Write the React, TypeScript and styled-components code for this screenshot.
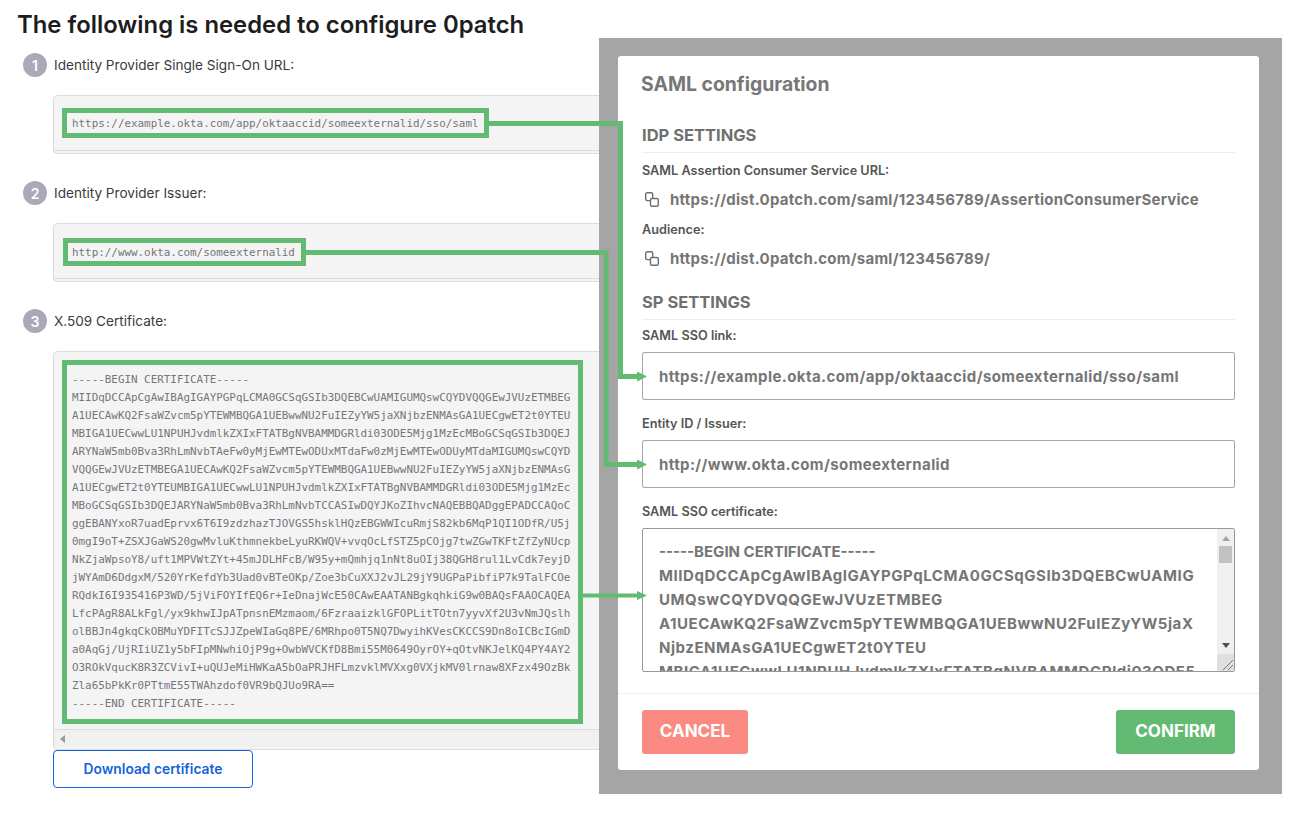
import React from "react";
import styled, { createGlobalStyle } from "styled-components";

const GlobalStyle = createGlobalStyle`
  html, body { margin: 0; padding: 0; background: #fff; }
  #root { width: 1312px; height: 821px; position: relative; overflow: hidden; }
  * { box-sizing: border-box; }
`;

const GREEN = "#62ba73";

const certLines = [
  "-----BEGIN CERTIFICATE-----",
  "MIIDqDCCApCgAwIBAgIGAYPGPqLCMA0GCSqGSIb3DQEBCwUAMIGUMQswCQYDVQQGEwJVUzETMBEG",
  "A1UECAwKQ2FsaWZvcm5pYTEWMBQGA1UEBwwNU2FuIEZyYW5jaXNjbzENMAsGA1UECgwET2t0YTEU",
  "MBIGA1UECwwLU1NPUHJvdmlkZXIxFTATBgNVBAMMDGRldi03ODE5Mjg1MzEcMBoGCSqGSIb3DQEJ",
  "ARYNaW5mb0Bva3RhLmNvbTAeFw0yMjEwMTEwODUxMTdaFw0zMjEwMTEwODUyMTdaMIGUMQswCQYD",
  "VQQGEwJVUzETMBEGA1UECAwKQ2FsaWZvcm5pYTEWMBQGA1UEBwwNU2FuIEZyYW5jaXNjbzENMAsG",
  "A1UECgwET2t0YTEUMBIGA1UECwwLU1NPUHJvdmlkZXIxFTATBgNVBAMMDGRldi03ODE5Mjg1MzEc",
  "MBoGCSqGSIb3DQEJARYNaW5mb0Bva3RhLmNvbTCCASIwDQYJKoZIhvcNAQEBBQADggEPADCCAQoC",
  "ggEBANYxoR7uadEprvx6T6I9zdzhazTJOVGS5hsklHQzEBGWWIcuRmjS82kb6MqP1QI1ODfR/U5j",
  "0mgI9oT+ZSXJGaWS20gwMvluKthmnekbeLyuRKWQV+vvqOcLfSTZ5pCOjg7twZGwTKFtZfZyNUcp",
  "NkZjaWpsoY8/uft1MPVWtZYt+45mJDLHFcB/W95y+mQmhjq1nNt8uOIj38QGH8rul1LvCdk7eyjD",
  "jWYAmD6DdgxM/520YrKefdYb3Uad0vBTeOKp/Zoe3bCuXXJ2vJL29jY9UGPaPibfiP7k9TalFCOe",
  "RQdkI6I935416P3WD/5jViFOYIfEQ6r+IeDnajWcE50CAwEAATANBgkqhkiG9w0BAQsFAAOCAQEA",
  "LfcPAgR8ALkFgl/yx9khwIJpATpnsnEMzmaom/6FzraaizklGFOPLitTOtn7yyvXf2U3vNmJQslh",
  "olBBJn4gkqCkOBMuYDFITcSJJZpeWIaGq8PE/6MRhpo0T5NQ7DwyihKVesCKCCS9Dn8oICBcIGmD",
  "a0AqGj/UjRIiUZ1y5bFIpMNwhiOjP9g+OwbWVCKfD8Bmi55M0649OyrOY+qOtvNKJelKQ4PY4AY2",
  "O3ROkVqucK8R3ZCVivI+uQUJeMiHWKaA5bOaPRJHFLmzvklMVXxg0VXjkMV0lrnaw8XFzx49OzBk",
  "Zla65bPkKr0PTtmE55TWAhzdof0VR9bQJUo9RA==",
  "-----END CERTIFICATE-----",
];

const Page = styled.div`
  width: 1312px;
  height: 821px;
  padding: 10px 0 0 18px;
  font-family: Inter, "Liberation Sans", sans-serif;
  color: #1d1d21;
`;

const Title = styled.h1`
  margin: 0 0 13px -1px;
  font-size: 23.85px;
  line-height: 30px;
  font-weight: 600;
  color: #1d1d21;
`;

const StepRow = styled.div`
  display: flex;
  align-items: center;
  gap: 7px;
  height: 24px;
  margin: 0 0 18px 5px;
`;

const StepNumber = styled.span`
  width: 24px;
  height: 24px;
  border-radius: 50%;
  background: #a9a9b7;
  color: #fff;
  font-size: 14px;
  font-weight: 600;
  display: flex;
  align-items: center;
  justify-content: center;
`;

const StepLabel = styled.span`
  font-size: 13.6px;
  color: #3a3a40;
`;

const CodeBlock = styled.div<{ $mb?: number }>`
  width: 600px;
  margin: 0 0 ${(p) => p.$mb ?? 27}px 35px;
  background: #f4f4f4;
  border: 1px solid #dcdcdc;
  border-radius: 4px;
  padding-bottom: 2px;
`;

const CodeInner = styled.div<{ $h: number; $pt: number; $pl: number }>`
  height: ${(p) => p.$h}px;
  padding: ${(p) => p.$pt}px 0 0 ${(p) => p.$pl}px;
  border-bottom: 1px solid #dcdcdc;
`;

const Highlight = styled.pre<{ $pad: string; $lh?: number }>`
  display: inline-block;
  margin: 0;
  border: 5px solid ${GREEN};
  padding: ${(p) => p.$pad};
  font-family: "DejaVu Sans Mono", "Liberation Mono", monospace;
  font-size: 10.9px;
  line-height: ${(p) => p.$lh ?? 18}px;
  color: #75757b;
`;

const HScroll = styled.div`
  height: 17px;
  background: #f0f0f0;
  display: flex;
  align-items: center;
  padding-left: 6px;
`;

const ArrowLeft = styled.span`
  width: 0;
  height: 0;
  border-top: 4px solid transparent;
  border-bottom: 4px solid transparent;
  border-right: 5px solid #9a9a9a;
`;

const DownloadButton = styled.button`
  display: block;
  width: 200px;
  height: 38px;
  margin-left: 35px;
  background: #fff;
  border: 1px solid #1662dd;
  border-radius: 4px;
  color: #1662dd;
  font-family: Inter, "Liberation Sans", sans-serif;
  font-size: 13.8px;
  font-weight: 600;
`;

const Overlay = styled.div`
  position: absolute;
  left: 599px;
  top: 38px;
  width: 683px;
  height: 756px;
  background: #a5a5a5;
  padding: 18px 23px 24px 19px;
`;

const Modal = styled.div`
  height: 714px;
  background: #fff;
  border-radius: 3px;
  display: flex;
  flex-direction: column;
  color: #6f6f6f;
  font-family: Inter, "Open Sans", sans-serif;
`;

const ModalBody = styled.div`
  flex: 1;
  padding: 16px 24px 0 24px;
  overflow: hidden;
`;

const ModalTitle = styled.h2`
  margin: 0 0 27px -1px;
  font-size: 19.4px;
  line-height: 24px;
  font-weight: 700;
  color: #777;
`;

const Section = styled.h3<{ $mb: number }>`
  margin: 0 0 ${(p) => p.$mb}px;
  font-size: 16.5px;
  line-height: 24px;
  font-weight: 700;
  color: #707070;
  padding-bottom: 5px;
  border-bottom: 1px solid #eee;
`;

const FieldLabel = styled.div<{ $mb?: number }>`
  margin-bottom: ${(p) => p.$mb ?? 8}px;
  font-size: 12.7px;
  line-height: 18px;
  font-weight: 600;
  color: #555;
`;

const CopyRow = styled.div<{ $mb: number }>`
  display: flex;
  align-items: center;
  gap: 11px;
  height: 22px;
  padding-left: 3px;
  margin-bottom: ${(p) => p.$mb}px;
  font-size: 15px;
  letter-spacing: 0.25px;
  font-weight: 700;
  color: #767676;
`;

const CopySvg = styled.svg`
  flex: none;
  width: 14px;
  height: 15px;
`;

const InputBox = styled.div`
  height: 48px;
  margin-bottom: 15px;
  border: 1px solid #a6a6a6;
  border-radius: 2px;
  padding-left: 16px;
  display: flex;
  align-items: center;
  font-size: 15px;
  letter-spacing: 0.42px;
  font-weight: 700;
  color: #767676;
`;

const TextAreaBox = styled.div`
  height: 144px;
  border: 1px solid #999;
  border-radius: 2px;
  display: flex;
  overflow: hidden;
`;

const TextAreaText = styled.div`
  flex: 1;
  padding: 11px 0 0 16px;
  font-size: 15px;
  letter-spacing: 0.55px;
  line-height: 24px;
  font-weight: 700;
  color: #767676;
  white-space: pre;
  overflow: hidden;
`;

const TightLine = styled.span`
  letter-spacing: 0;
`;

const VScroll = styled.div`
  width: 17px;
  flex: none;
  background: #f0f0f0;
  display: flex;
  flex-direction: column;
  align-items: center;
`;

const ArrowUp = styled.span`
  margin-top: 7px;
  width: 0;
  height: 0;
  border-left: 4px solid transparent;
  border-right: 4px solid transparent;
  border-bottom: 5px solid #a3a3a3;
`;

const Thumb = styled.span`
  width: 13px;
  height: 17px;
  margin-top: 5px;
  background: #c2c2c2;
`;

const ArrowDown = styled.span`
  margin-top: 80px;
  width: 0;
  height: 0;
  border-left: 4px solid transparent;
  border-right: 4px solid transparent;
  border-top: 5px solid #505050;
`;

const Resizer = styled.svg`
  margin-top: auto;
  width: 17px;
  height: 17px;
  background: #dfdfdf;
`;

const ModalFooter = styled.div`
  height: 77px;
  padding: 16px 24px 0 24px;
  border-top: 1px solid #eee;
  display: flex;
  justify-content: space-between;
  align-items: flex-start;
`;

const ActionButton = styled.button<{ $bg: string; $w: number }>`
  width: ${(p) => p.$w}px;
  height: 44px;
  padding: 0 0 2px;
  border: 0;
  border-radius: 3px;
  background: ${(p) => p.$bg};
  color: #fff;
  font-family: Inter, "Open Sans", sans-serif;
  font-size: 17px;
  font-weight: 700;
`;

const Connectors = styled.svg`
  position: absolute;
  left: 0;
  top: 0;
  width: 1312px;
  height: 821px;
  pointer-events: none;
`;

const CopyIcon = () => (
  <CopySvg viewBox="0 0 14 15" fill="none" stroke="#6f6f6f" strokeWidth="1.4">
    <path d="M5.5 8.6H2.2A1.5 1.5 0 0 1 .7 7.1V2.2A1.5 1.5 0 0 1 2.2.7h4a1.5 1.5 0 0 1 1.5 1.5v4.3" />
    <rect x="5.5" y="6.5" width="7.8" height="7.8" rx="1.5" />
  </CopySvg>
);

export default function App() {
  return (
    <>
      <GlobalStyle />
      <Page>
        <Title>The following is needed to configure 0patch</Title>
        <StepRow>
          <StepNumber>1</StepNumber>
          <StepLabel>Identity Provider Single Sign-On URL:</StepLabel>
        </StepRow>
        <CodeBlock>
          <CodeInner $h={55} $pt={12} $pl={8}>
            <Highlight $pad="2px 5px 0 5px">https://example.okta.com/app/oktaaccid/someexternalid/sso/saml</Highlight>
          </CodeInner>
        </CodeBlock>
        <StepRow>
          <StepNumber>2</StepNumber>
          <StepLabel>Identity Provider Issuer:</StepLabel>
        </StepRow>
        <CodeBlock>
          <CodeInner $h={55} $pt={14} $pl={9}>
            <Highlight $pad="1px 6px 0 4px" $lh={17}>http://www.okta.com/someexternalid</Highlight>
          </CodeInner>
        </CodeBlock>
        <StepRow>
          <StepNumber>3</StepNumber>
          <StepLabel>X.509 Certificate:</StepLabel>
        </StepRow>
        <CodeBlock $mb={0}>
          <CodeInner $h={378} $pt={8} $pl={8}>
            <Highlight $pad="6px 8px 6px 5px">{certLines.join("\n")}</Highlight>
          </CodeInner>
          <HScroll>
            <ArrowLeft />
          </HScroll>
        </CodeBlock>
        <DownloadButton>Download certificate</DownloadButton>
      </Page>

      <Overlay>
        <Modal>
          <ModalBody>
            <ModalTitle>SAML configuration</ModalTitle>
            <Section $mb={9}>IDP SETTINGS</Section>
            <FieldLabel>SAML Assertion Consumer Service URL:</FieldLabel>
            <CopyRow $mb={11}>
              <CopyIcon />
              https://dist.0patch.com/saml/123456789/AssertionConsumerService
            </CopyRow>
            <FieldLabel>Audience:</FieldLabel>
            <CopyRow $mb={21}>
              <CopyIcon />
              https://dist.0patch.com/saml/123456789/
            </CopyRow>
            <Section $mb={7}>SP SETTINGS</Section>
            <FieldLabel $mb={7}>SAML SSO link:</FieldLabel>
            <InputBox>https://example.okta.com/app/oktaaccid/someexternalid/sso/saml</InputBox>
            <FieldLabel $mb={7}>Entity ID / Issuer:</FieldLabel>
            <InputBox>http://www.okta.com/someexternalid</InputBox>
            <FieldLabel $mb={7}>SAML SSO certificate:</FieldLabel>
            <TextAreaBox>
              <TextAreaText>
                <TightLine>-----BEGIN CERTIFICATE-----</TightLine>
                {"\n" +
                  [
                    "MIIDqDCCApCgAwIBAgIGAYPGPqLCMA0GCSqGSIb3DQEBCwUAMIG",
                    "UMQswCQYDVQQGEwJVUzETMBEG",
                    "A1UECAwKQ2FsaWZvcm5pYTEWMBQGA1UEBwwNU2FuIEZyYW5jaX",
                    "NjbzENMAsGA1UECgwET2t0YTEU",
                    "MBIGA1UECwwLU1NPUHJvdmlkZXIxFTATBgNVBAMMDGRldi03ODE5",
                  ].join("\n")}
              </TextAreaText>
              <VScroll>
                <ArrowUp />
                <Thumb />
                <ArrowDown />
                <Resizer viewBox="0 0 17 17" stroke="#777" strokeWidth="1">
                  <path d="M6 16 16 6M11 16l5-5" />
                </Resizer>
              </VScroll>
            </TextAreaBox>
          </ModalBody>
          <ModalFooter>
            <ActionButton $bg="#fa8a82" $w={106}>CANCEL</ActionButton>
            <ActionButton $bg={GREEN} $w={119}>CONFIRM</ActionButton>
          </ModalFooter>
        </Modal>
      </Overlay>

      <Connectors viewBox="0 0 1312 821">
        <g fill="none" stroke={GREEN} strokeWidth="5">
          <path d="M489 123.5H620.5V376.5H638" />
          <path d="M306 252.5H606V464.5H638" />
        </g>
        <path d="M583 595.5H638" fill="none" stroke={GREEN} strokeWidth="4" />
        <g fill={GREEN}>
          <path d="M637 371.5 647 376.5 637 381.5Z" />
          <path d="M637 459.5 647 464.5 637 469.5Z" />
          <path d="M637 591 647 595.5 637 600Z" />
        </g>
      </Connectors>
    </>
  );
}
